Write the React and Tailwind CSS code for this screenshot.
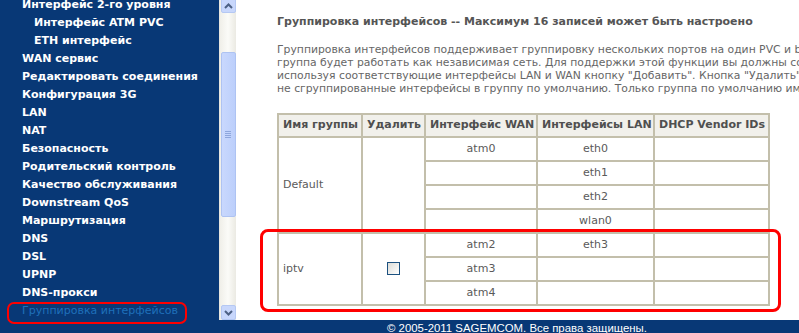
import React from 'react';

const menu = [
  { label: 'Интерфейс 2-го уровня', sub: false },
  { label: 'Интерфейс ATM PVC', sub: true },
  { label: 'ETH интерфейс', sub: true },
  { label: 'WAN сервис' },
  { label: 'Редактировать соединения' },
  { label: 'Конфигурация 3G' },
  { label: 'LAN' },
  { label: 'NAT' },
  { label: 'Безопасность' },
  { label: 'Родительский контроль' },
  { label: 'Качество обслуживания' },
  { label: 'Downstream QoS' },
  { label: 'Маршрутизация' },
  { label: 'DNS' },
  { label: 'DSL' },
  { label: 'UPNP' },
  { label: 'DNS-прокси' },
  { label: 'Группировка интерфейсов', active: true },
];

const font = { fontFamily: '"DejaVu Sans", Verdana, sans-serif' };

function Chevron({ up }) {
  return (
    <svg width="9" height="6" viewBox="0 0 9 6" className="block">
      <path
        d={up ? 'M1 5 L4.5 1.5 L8 5' : 'M1 1 L4.5 4.5 L8 1'}
        fill="none"
        stroke="#4d6185"
        strokeWidth="2"
      />
    </svg>
  );
}

function Scrollbar() {
  return (
    <div className="w-[17px] h-full flex flex-col items-center bg-gradient-to-r from-[#f0efe9] via-[#fbfbf8] to-[#ebeae3] border-l border-[#e6e5de]">
      <div className="mt-[-2px] w-[15px] h-[15px] rounded-[2px] border border-[#b5c8f3] bg-[#c8d7fc] flex items-center justify-center">
        <Chevron up />
      </div>
      <div className="mt-[39px] w-[15px] h-[165px] rounded-[2px] border border-[#aec3f2] bg-gradient-to-r from-[#c9d8fd] to-[#bccffb] flex flex-col items-center justify-center gap-[1px]">
        <div className="w-[6px] h-[1px] bg-[#8ea6dc]" />
        <div className="w-[6px] h-[1px] bg-[#8ea6dc]" />
        <div className="w-[6px] h-[1px] bg-[#8ea6dc]" />
        <div className="w-[6px] h-[1px] bg-[#8ea6dc]" />
      </div>
      <div className="flex-1" />
      <div className="w-[15px] h-[15px] rounded-[2px] border border-[#b5c8f3] bg-[#c8d7fc] flex items-center justify-center">
        <Chevron />
      </div>
    </div>
  );
}

function Cell({ children, className = '', ...rest }) {
  return (
    <td className={`border border-[#c3bfab] px-1 text-[11px] text-[#5a5a5a] ${className}`} {...rest}>
      {children}
    </td>
  );
}

function Th({ children }) {
  return (
    <th className="border border-[#c3bfab] bg-[#f1f0eb] px-1 text-[11px] font-bold text-[#4f4f4f] whitespace-nowrap">
      {children}
    </th>
  );
}

export default function App() {
  const rows = [
    { group: 'Default', rows: [['atm0', 'eth0'], ['', 'eth1'], ['', 'eth2'], ['', 'wlan0']], remove: false },
    { group: 'iptv', rows: [['atm2', 'eth3'], ['atm3', ''], ['atm4', '']], remove: true },
  ];

  return (
    <div className="relative w-[799px] h-[333px] overflow-hidden bg-white flex flex-col" style={font}>
      <div className="flex h-[320px]">
        <div className="w-[219px] h-full bg-[#083876] overflow-hidden">
          <div className="mt-[-4px] flex flex-col">
            {menu.map((m) => (
              <div
                key={m.label}
                className={`h-[18px] leading-[18px] whitespace-nowrap text-[11px] ${m.sub ? 'pl-[34px]' : 'pl-[22px]'} ${
                  m.active ? 'text-[#1f70ba] font-normal' : 'text-white font-bold'
                }`}
              >
                {m.label}
              </div>
            ))}
          </div>
        </div>
        <Scrollbar />
        <div className="flex-1 h-full overflow-hidden pl-[41px] text-[#555]">
          <div className="pt-[15px] text-[11px] font-bold leading-[14px] whitespace-nowrap text-[#555]">
            Группировка интерфейсов -- Максимум 16 записей может быть настроено
          </div>
          <div className="mt-[14px] text-[10.8px] leading-[13px] whitespace-nowrap text-[#666]">
            <div>Группировка интерфейсов поддерживает группировку нескольких портов на один PVC и bridge. Каждая</div>
            <div>группа будет работать как независимая сеть. Для поддержки этой функции вы должны создать группы сопоставления</div>
            <div>используя соответствующие интерфейсы LAN и WAN кнопку "Добавить". Кнопка "Удалить" удалит группировку и добавит</div>
            <div>не сгруппированные интерфейсы в группу по умолчанию. Только группа по умолчанию имеет IP интерфейс.</div>
          </div>
          <table className="mt-[18px] w-[493px] table-fixed border-separate border-spacing-0 border border-[#c3bfab]">
            <colgroup>
              <col className="w-[84px]" />
              <col className="w-[63px]" />
              <col className="w-[112px]" />
              <col className="w-[117px]" />
              <col className="w-[115px]" />
            </colgroup>
            <thead>
              <tr className="h-[23px]">
                <Th>Имя группы</Th>
                <Th>Удалить</Th>
                <Th>Интерфейс WAN</Th>
                <Th>Интерфейсы LAN</Th>
                <Th>DHCP Vendor IDs</Th>
              </tr>
            </thead>
            <tbody>
              {rows.map((g) =>
                g.rows.map((r, i) => (
                  <tr key={g.group + i} className="h-[24px]">
                    {i === 0 && (
                      <>
                        <Cell rowSpan={g.rows.length}>{g.group}</Cell>
                        <Cell rowSpan={g.rows.length} className="text-center">
                          {g.remove && (
                            <span className="inline-block align-middle w-[13px] h-[13px] border border-[#1c5180] bg-gradient-to-br from-[#dcdcd7] to-white" />
                          )}
                        </Cell>
                      </>
                    )}
                    <Cell className="text-center">{r[0]}</Cell>
                    <Cell className="text-center">{r[1]}</Cell>
                    <Cell />
                  </tr>
                ))
              )}
            </tbody>
          </table>
        </div>
      </div>
      <div className="h-[13px] bg-[#083876] text-white text-[11.4px] leading-[16px] pl-[387px] whitespace-nowrap" style={{ fontFamily: '"Liberation Sans", Arial, sans-serif' }}>
        © 2005-2011 SAGEMCOM. Все права защищены.
      </div>

      {/* red highlight annotations */}
      <div className="absolute left-[7px] top-[302px] w-[180px] h-[22px] rounded-[7px] border-2 border-[#ff0000] pointer-events-none" />
      <div className="absolute left-[260px] top-[229px] w-[521px] h-[83px] rounded-[8px] border-[3px] border-[#ff0000] pointer-events-none" />
    </div>
  );
}
